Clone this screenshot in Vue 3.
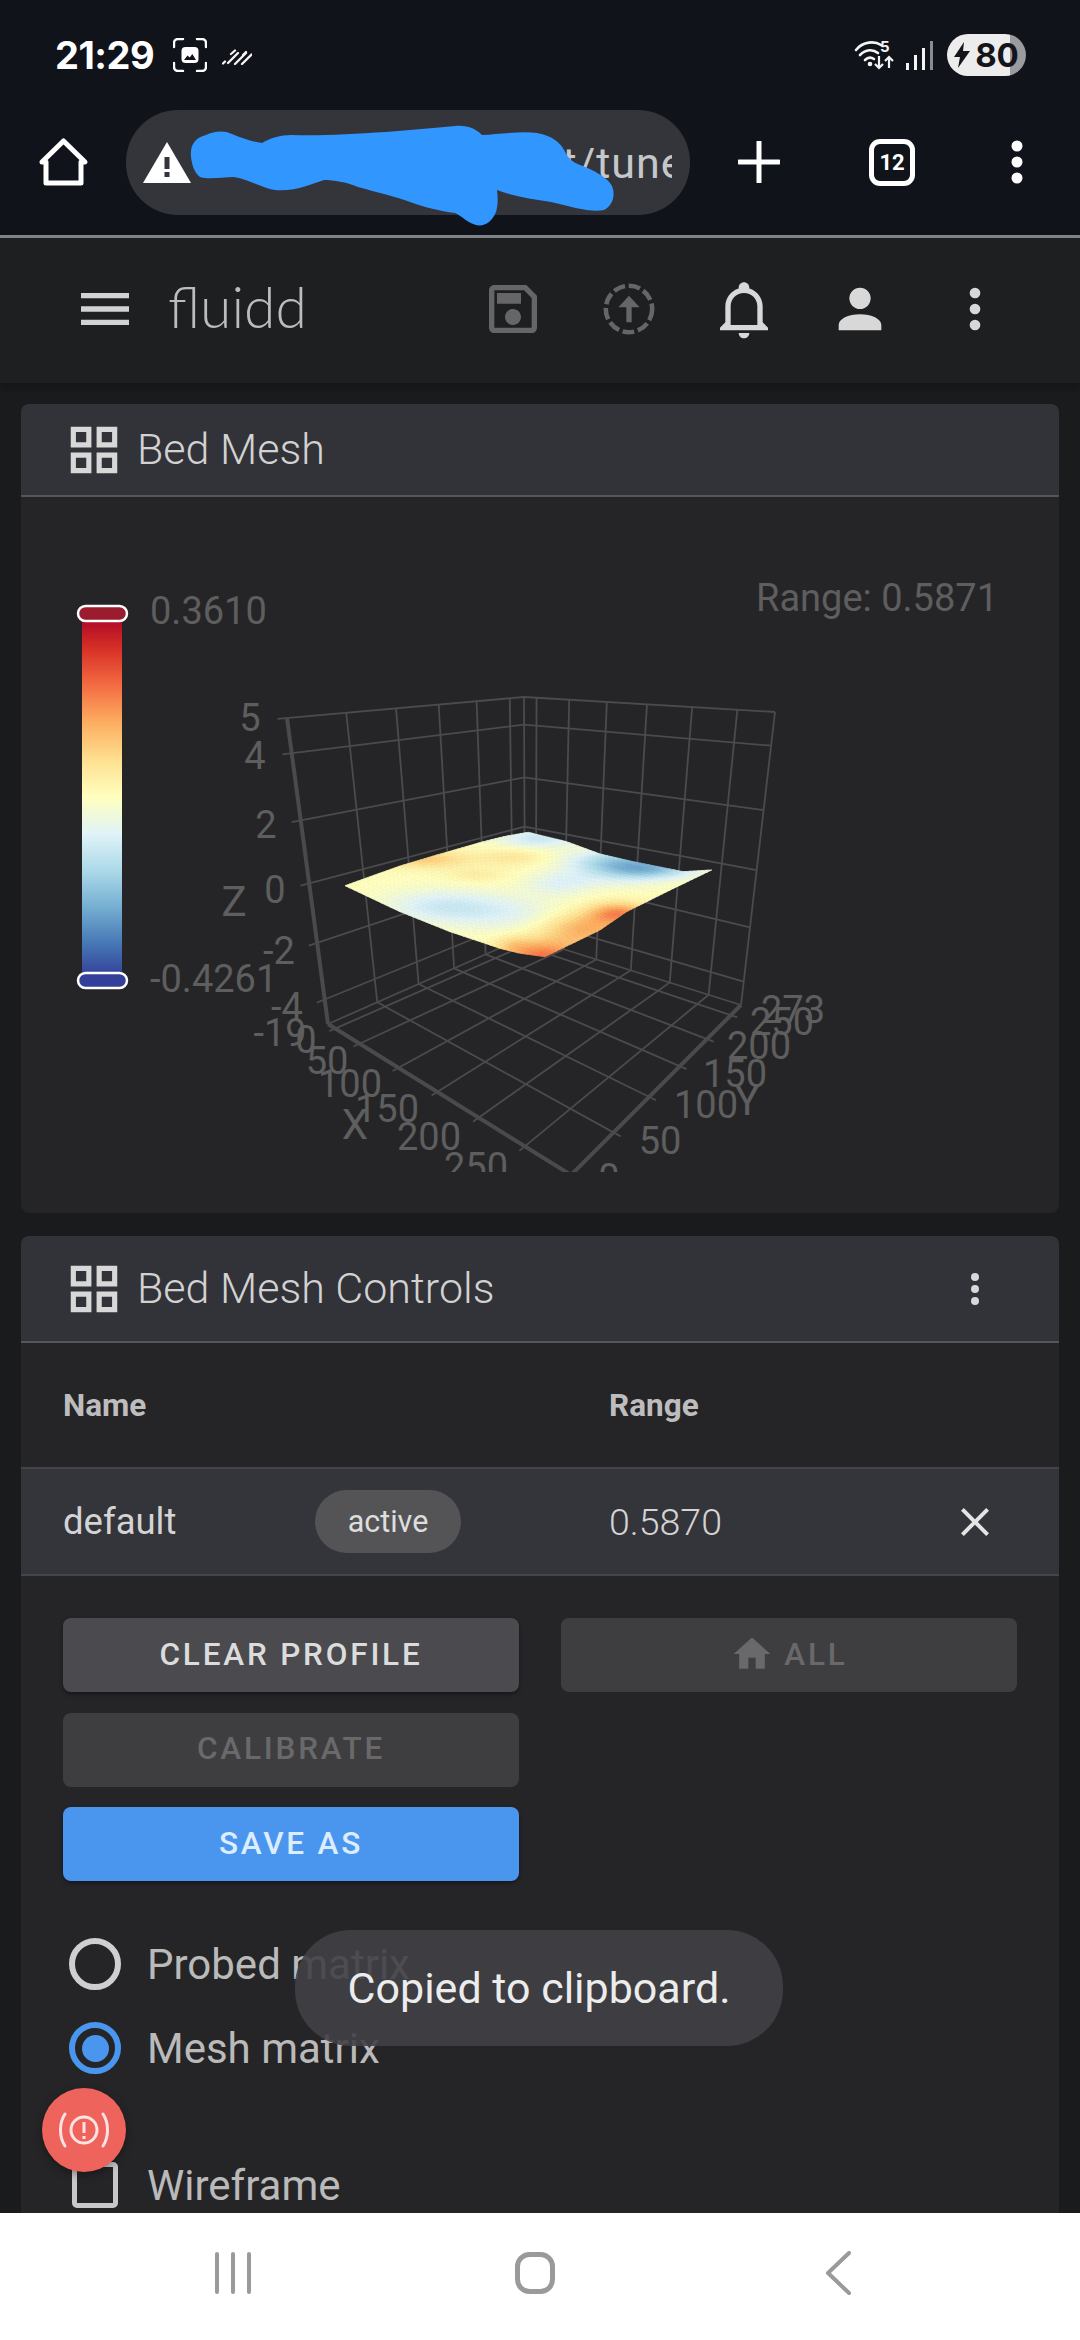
<template>
  <div class="phone">
    <div class="status">
      <span class="time">21:29</span>
      <svg class="shot" width="34" height="34" viewBox="0 0 34 34">
        <path d="M1 9V5a4 4 0 0 1 4-4h5M24 1h5a4 4 0 0 1 4 4v4M33 25v4a4 4 0 0 1-4 4h-5M10 33H5a4 4 0 0 1-4-4v-4" fill="none" stroke="#fff" stroke-width="2.4" stroke-linecap="round" />
        <rect x="8.5" y="9" width="17" height="16" rx="4" fill="#fff" />
        <path d="M11 22l3.5-4.5 2.2 2 2.6-3.5 3.7 6z" fill="#11131a" />
      </svg>
      <svg class="slashes" width="30" height="16" viewBox="0 0 30 16">
        <path d="M1 14.5l2-2M6 14l10-10M9 5l4-3.500M13 15L24 4M21 6l3-3M20 15l9.500-9.500" stroke="#f4f4f4" stroke-width="2.300" stroke-linecap="round" fill="none" />
      </svg>
      <div class="status-right">
        <svg width="42" height="30" viewBox="0 0 42 30">
          <path d="M2 10C9 1 21 1 27 5M6 15c6-6 13-6 18-2M11 20c3-3 6-3 9-1" fill="none" stroke="#f4f4f4" stroke-width="2.600" stroke-linecap="round" />
          <circle cx="16" cy="24" r="2.300" fill="#f4f4f4" />
          <text x="26" y="12" class="wifi-five">5</text>
          <path d="M25 16v12M21 24l4 4 4-4M35 28V17M31 21l4-4 4 4" fill="none" stroke="#f4f4f4" stroke-width="2.200" />
        </svg>
        <div class="signal">
          <i class="b1"></i><i class="b2"></i><i class="b3"></i><i class="b4"></i>
        </div>
        <div class="battery">
          <svg width="16" height="26" viewBox="0 0 16 26"><path d="M10 0L0 15h6l-2 11L16 9H9z" fill="#14151a" /></svg>
          <span>80</span>
        </div>
      </div>
    </div>

    <div class="browser">
      <svg class="home" width="56" height="56" viewBox="36 135 56 56">
        <path d="M63.500 142L85 163H81V184H46V163H42Z" fill="none" stroke="#fff" stroke-width="5" stroke-linejoin="round" />
      </svg>
      <div class="url">
        <svg width="48" height="42" viewBox="0 0 48 42">
          <path d="M24 0L48 41H0Z" fill="#fff" />
          <rect x="21.500" y="15" width="5" height="12" fill="#33353b" />
          <rect x="21.500" y="30" width="5" height="5" fill="#33353b" />
        </svg>
        <span class="url-text">it/tune</span>
      </div>
      <svg class="plus" width="42" height="42" viewBox="0 0 42 42">
        <path d="M21 1V41M1 21H41" stroke="#fff" stroke-width="5" stroke-linecap="round" />
      </svg>
      <div class="tabs">12</div>
      <svg class="browser-dots" width="16" height="46" viewBox="0 0 16 46">
        <circle cx="8" cy="7" r="5.500" fill="#fff" /><circle cx="8" cy="23" r="5.500" fill="#fff" /><circle cx="8" cy="39" r="5.500" fill="#fff" />
      </svg>
    </div>

    <svg class="scribble" width="1080" height="240" viewBox="0 0 1080 240">
      <path d="M191 157C190 146 194 138 206 135C214 131 224 130 232 134C242 138 252 142 262 143C270 138 280 135 292 135C320 136 352 134 386 132C410 130 434 128 455 126C468 125 476 129 482 135C500 134 522 131 537 133C552 136 560 142 564 150C568 158 572 162 580 165C594 170 608 178 612 186C616 196 612 206 604 210C592 213 572 207 551 202C532 199 512 196 497 190C498 198 498 205 496 212C492 222 484 227 476 225C466 222 462 216 455 213C440 211 424 207 413 203C394 196 376 192 358 187C346 182 334 180 324 180C312 184 294 192 275 190C262 188 250 180 234 177C222 177 210 180 200 177C194 172 192 165 191 157Z" fill="#3197ff" />
    </svg>

    <div class="appbar">
      <svg class="menu" viewBox="0 0 24 24"><path :d="icons.menu" /></svg>
      <span class="logo">fluidd</span>
      <div class="appbar-actions">
        <button class="icon-btn off"><svg viewBox="0 0 24 24"><path :d="icons.save" /></svg></button>
        <button class="icon-btn off">
          <svg viewBox="0 0 24 24">
            <circle cx="12" cy="12" r="8.700" fill="none" stroke="currentColor" stroke-width="1.700" stroke-dasharray="4.400 1.400" />
            <path d="M12 7L8 11.300H11V17H13V11.300H16Z" />
          </svg>
        </button>
        <button class="icon-btn"><svg viewBox="0 0 24 24"><path :d="icons.bell" /></svg></button>
        <button class="icon-btn"><svg viewBox="0 0 24 24"><path :d="icons.account" /></svg></button>
        <button class="icon-btn"><svg viewBox="0 0 24 24"><path :d="icons.dots" /></svg></button>
      </div>
    </div>

    <main class="content">
      <section class="card">
        <header class="card-head slim">
          <svg class="card-icon" viewBox="0 0 24 24"><path :d="icons.grid" /></svg>
          <span class="card-title">Bed Mesh</span>
        </header>
        <svg class="chart" width="1038" height="716" viewBox="21 497 1038 716">
          <defs>
            <linearGradient id="legend" x1="0" y1="0" x2="0" y2="1">
              <stop v-for="(c, i) in legendStops" :key="i" :offset="i / (legendStops.length - 1)" :stop-color="c" />
            </linearGradient>
            <clipPath id="plot"><rect x="21" y="497" width="1038" height="675" /></clipPath>
          </defs>

          <rect x="82" y="612" width="40" height="370" fill="url(#legend)" />
          <rect x="78" y="606" width="49" height="15" rx="7.500" fill="#9b1c2e" stroke="#fff" stroke-width="2.500" />
          <rect x="78" y="973" width="49" height="15" rx="7.500" fill="#33409a" stroke="#fff" stroke-width="2.500" />
          <text x="150" y="624" class="chart-text">0.3610</text>
          <text x="150" y="992" class="chart-text">-0.4261</text>
          <text x="998" y="611" class="chart-text" text-anchor="end">Range: 0.5871</text>

          <g clip-path="url(#plot)">
            <line v-for="(l, i) in gridLines" :key="'g' + i" :x1="l[0]" :y1="l[1]" :x2="l[2]" :y2="l[3]" class="grid-line" />
            <line v-for="(l, i) in axisLines" :key="'a' + i" :x1="l[0]" :y1="l[1]" :x2="l[2]" :y2="l[3]" class="axis-line" />
            <polygon v-for="(q, i) in meshQuads" :key="'m' + i" :points="q.points" :fill="q.color" :stroke="q.color" stroke-width="0.800" />
            <text v-for="t in axisLabels" :key="t.s + t.x" :x="t.x" :y="t.y + 13" class="chart-text" text-anchor="middle">{{ t.s }}</text>
            <text x="234" y="916" class="chart-title" text-anchor="middle">Z</text>
            <text x="355" y="1139" class="chart-title" text-anchor="middle">X</text>
            <text x="747" y="1115" class="chart-title" text-anchor="middle">Y</text>
          </g>
        </svg>
      </section>

      <section class="card">
        <header class="card-head">
          <svg class="card-icon" viewBox="0 0 24 24"><path :d="icons.grid" /></svg>
          <span class="card-title">Bed Mesh Controls</span>
          <svg class="card-dots" viewBox="0 0 24 24"><path :d="icons.dots" /></svg>
        </header>

        <div class="mesh-table head">
          <span>Name</span>
          <span></span>
          <span>Range</span>
        </div>
        <div class="mesh-table row">
          <span>default</span>
          <span><span class="chip">active</span></span>
          <span class="range-val">0.5870</span>
          <svg class="close" viewBox="0 0 24 24"><path :d="icons.close" /></svg>
        </div>

        <div class="actions">
          <button class="btn">CLEAR PROFILE</button>
          <button class="btn disabled">
            <svg viewBox="0 0 24 24"><path :d="icons.home" /></svg>
            ALL
          </button>
          <button class="btn disabled">CALIBRATE</button>
          <span></span>
          <button class="btn primary">SAVE AS</button>
        </div>

        <div class="options">
          <label class="opt"><span class="radio"></span>Probed matrix</label>
          <label class="opt"><span class="radio on"></span>Mesh matrix</label>
          <label class="opt wire"><span class="check"></span>Wireframe</label>
        </div>
      </section>
    </main>

    <nav class="navbar">
      <svg width="36" height="42" viewBox="0 0 36 42"><path d="M2 2V40M18 2V40M34 2V40" stroke="#9a9a9a" stroke-width="4" stroke-linecap="round" /></svg>
      <svg width="40" height="42" viewBox="0 0 40 42"><rect x="2.500" y="2.500" width="35" height="37" rx="12" fill="none" stroke="#9a9a9a" stroke-width="5" /></svg>
      <svg width="26" height="44" viewBox="0 0 26 44"><path d="M24 2L3 22L24 42" fill="none" stroke="#9a9a9a" stroke-width="4" stroke-linecap="round" stroke-linejoin="round" /></svg>
    </nav>

    <div class="toast">Copied to clipboard.</div>
    <button class="fab">
      <svg width="50" height="40" viewBox="0 0 50 40">
        <circle cx="25" cy="20" r="13" fill="none" stroke="#ffe3e1" stroke-width="3" />
        <path d="M25 12V23M25 26V29" stroke="#ffe3e1" stroke-width="3" />
        <path d="M6 4C0 13 0 27 6 36M44 4C50 13 50 27 44 36" fill="none" stroke="#ffe3e1" stroke-width="3" stroke-linecap="round" />
      </svg>
    </button>
  </div>
</template>

<script setup>
const icons = {
  menu: 'M3,6H21V8H3V6M3,11H21V13H3V11M3,16H21V18H3V16Z',
  dots: 'M12,16A2,2 0 0,1 14,18A2,2 0 0,1 12,20A2,2 0 0,1 10,18A2,2 0 0,1 12,16M12,10A2,2 0 0,1 14,12A2,2 0 0,1 12,14A2,2 0 0,1 10,12A2,2 0 0,1 12,10M12,4A2,2 0 0,1 14,6A2,2 0 0,1 12,8A2,2 0 0,1 10,6A2,2 0 0,1 12,4Z',
  account: 'M12,4A4,4 0 0,1 16,8A4,4 0 0,1 12,12A4,4 0 0,1 8,8A4,4 0 0,1 12,4M12,14C16.42,14 20,15.79 20,18V20H4V18C4,15.79 7.58,14 12,14Z',
  bell: 'M10 21H14C14 22.1 13.1 23 12 23S10 22.1 10 21M21 19V20H3V19L5 17V11C5 7.9 7 5.2 10 4.3V4C10 2.9 10.9 2 12 2S14 2.9 14 4V4.3C17 5.2 19 7.9 19 11V17L21 19M17 11C17 8.2 14.8 6 12 6S7 8.2 7 11V18H17V11Z',
  save: 'M17 3H5C3.89 3 3 3.9 3 5V19C3 20.1 3.89 21 5 21H19C20.1 21 21 20.1 21 19V7L17 3M19 19H5V5H16.17L19 7.83V19M12 12C10.34 12 9 13.34 9 15S10.34 18 12 18 15 16.66 15 15 13.66 12 12 12M6 6H15V10H6V6Z',
  grid: 'M3 11H11V3H3M5 5H9V9H5M13 21H21V13H13M15 15H19V19H15M3 21H11V13H3M5 15H9V19H5M13 3V11H21V3M19 9H15V5H19Z',
  close: 'M19,6.41L17.59,5L12,10.59L6.41,5L5,6.41L10.59,12L5,17.59L6.41,19L12,13.41L17.59,19L19,17.59L13.41,12L19,6.41Z',
  home: 'M10,20V14H14V20H19V12H22L12,3L2,12H5V20H10Z'
}

// RdYlBu, low to high
const palette = ['#313695', '#4575b4', '#74add1', '#abd9e9', '#e0f3f8', '#ffffbf', '#fee090', '#fdae61', '#f46d43', '#d73027', '#a50026']
const legendStops = [...palette].reverse()

const mix = (a, b, t) => a + (b - a) * t
const lerp = (p, q, t) => [mix(p[0], q[0], t), mix(p[1], q[1], t)]

// plot corners in page coordinates
const TL = [287, 718]
const TC = [524, 697]
const TR = [775, 712]
const L = [328, 1024]
const B = [525, 937]
const R = [741, 1005]
const F = [571, 1175]

const xTicks = [0.03, 0.13, 0.29, 0.45, 0.62, 0.81]
const xTicksBack = [0.05, 0.18, 0.33, 0.49, 0.67, 0.85]
const yTicks = [0.25, 0.46, 0.64, 0.8, 0.94]
const zTicks = [0, 0.115, 0.335, 0.54, 0.735, 0.92]

const seg = (p, q, over = 0) => {
  const end = lerp(p, q, 1 + over)
  return [p[0], p[1], end[0], end[1]]
}

const gridLines = []
xTicks.forEach((t, i) => {
  const back = lerp(B, R, xTicksBack[i])
  gridLines.push(seg(back, lerp(L, F, t), 0.03))
  gridLines.push(seg(back, lerp(TC, TR, xTicksBack[i])))
})
yTicks.forEach((t) => {
  const side = lerp(L, B, t)
  gridLines.push(seg(side, lerp(F, R, t), 0.03))
  gridLines.push(seg(side, lerp(TL, TC, t)))
})
zTicks.forEach((t) => {
  const mid = lerp(TC, B, t)
  gridLines.push(seg(mid, lerp(TL, L, t), 0.04))
  gridLines.push(seg(mid, lerp(TR, R, t)))
})
gridLines.push(seg(L, B), seg(B, R), seg(TC, B), seg(TR, R))

const axisLines = [seg(L, F), seg(F, R), seg(TL, L)]

const axisLabels = [
  { s: '5', x: 250, y: 718 }, { s: '4', x: 255, y: 756 }, { s: '2', x: 266, y: 825 },
  { s: '0', x: 275, y: 890 }, { s: '-2', x: 279, y: 951 }, { s: '-4', x: 287, y: 1007 },
  { s: '-19', x: 280, y: 1033 }, { s: '0', x: 306, y: 1040 }, { s: '50', x: 327, y: 1061 },
  { s: '100', x: 350, y: 1084 }, { s: '150', x: 387, y: 1109 }, { s: '200', x: 429, y: 1137 },
  { s: '250', x: 476, y: 1167 }, { s: '273', x: 793, y: 1010 }, { s: '250', x: 782, y: 1022 },
  { s: '200', x: 759, y: 1046 }, { s: '150', x: 735, y: 1074 }, { s: '100', x: 706, y: 1105 },
  { s: '50', x: 660, y: 1141 }, { s: '0', x: 609, y: 1178 }
]

// surface edges, measured from the plot (x must be monotonic)
const e1 = [[135, 317], [300, 258], [400, 228], [550, 185], [620, 168], [685, 157]]
const e2 = [[735, 530], [900, 450], [980, 395], [1100, 335], [1235, 270]]
const e3 = [[135, 317], [300, 395], [450, 455], [600, 505], [660, 520], [735, 530]]
const e4 = [[685, 157], [800, 185], [900, 222], [1000, 245], [1150, 275], [1235, 270]]

const along = (poly, t) => {
  const x = mix(poly[0][0], poly[poly.length - 1][0], t)
  for (let i = 1; i < poly.length; i++) {
    if (x <= poly[i][0]) {
      const k = (x - poly[i - 1][0]) / (poly[i][0] - poly[i - 1][0])
      return [x, mix(poly[i - 1][1], poly[i][1], k)]
    }
  }
  return poly[poly.length - 1]
}

const surface = (u, v) => {
  const a = along(e1, u)
  const b = along(e2, u)
  const c = along(e3, v)
  const d = along(e4, v)
  return [0, 1].map((k) =>
    (1 - v) * a[k] + v * b[k] + (1 - u) * c[k] + u * d[k] -
    ((1 - u) * (1 - v) * e1[0][k] + u * (1 - v) * e1[5][k] + (1 - u) * v * e2[0][k] + u * v * e2[4][k])
  )
}

const bumps = [
  [950, 245, 100, 26, -0.42], [1070, 268, 90, 20, -0.38], [720, 175, 90, 20, -0.28],
  [420, 378, 120, 35, -0.24], [620, 400, 130, 40, -0.17], [780, 310, 70, 25, -0.18],
  [950, 290, 100, 25, -0.14], [960, 398, 60, 22, 0.45], [860, 445, 90, 35, 0.38],
  [735, 530, 80, 35, 0.55], [640, 495, 40, 20, 0.15], [380, 238, 90, 18, 0.26],
  [640, 232, 70, 18, 0.13], [530, 285, 60, 15, 0.1]
]

const heightAt = (x, y) => bumps.reduce((sum, [cx, cy, sx, sy, a]) =>
  sum + a * Math.exp(-((x - cx) ** 2) / (2 * sx * sx) - ((y - cy) ** 2) / (2 * sy * sy)), 0.01)

const hexToRgb = (h) => [1, 3, 5].map((i) => parseInt(h.slice(i, i + 2), 16))

const colorAt = (value) => {
  const pos = Math.min(9.999, Math.max(0, (value + 1) * 5))
  const i = Math.floor(pos)
  const p = hexToRgb(palette[i])
  const q = hexToRgb(palette[i + 1])
  return `rgb(${p.map((c, k) => Math.round(mix(c, q[k], pos - i))).join(',')})`
}

const toPage = ([x, y]) => `${(x / 3 + 300).toFixed(1)},${(y / 3 + 780).toFixed(1)}`

const steps = 44
const meshQuads = []
for (let i = 0; i < steps; i++) {
  for (let j = 0; j < steps; j++) {
    const corners = [[i, j], [i + 1, j], [i + 1, j + 1], [i, j + 1]].map(([a, b]) => surface(a / steps, b / steps))
    const mid = surface((i + 0.5) / steps, (j + 0.5) / steps)
    meshQuads.push({ points: corners.map(toPage).join(' '), color: colorAt(heightAt(mid[0], mid[1])) })
  }
}
</script>

<style>
html, body {
  margin: 0;
  background: #1a1b1d;
}
</style>

<style scoped>
.phone {
  position: relative;
  width: 1080px;
  height: 2340px;
  display: flex;
  flex-direction: column;
  overflow: hidden;
  font-family: Roboto, "Liberation Sans", sans-serif;
  background: #1a1b1d;
}

.status {
  height: 110px;
  flex: none;
  display: flex;
  align-items: center;
  padding: 0 54px 0 55px;
  background: #11131a;
  color: #fff;
}
.time {
  font-family: Inter, sans-serif;
  font-weight: 700;
  font-size: 38px;
  letter-spacing: -0.5px;
  width: 118px;
}
.slashes {
  margin-left: 15px;
  margin-top: 4px;
}
.status-right {
  margin-left: auto;
  display: flex;
  align-items: center;
}
.wifi-five {
  font: 700 15px Inter, sans-serif;
  fill: #f4f4f4;
}
.signal {
  display: flex;
  align-items: flex-end;
  gap: 4.500px;
  height: 29px;
  margin-left: 10px;
}
.signal i {
  width: 3.500px;
  background: #f4f4f4;
}
.signal .b1 { height: 7px; }
.signal .b2 { height: 15px; }
.signal .b3 { height: 22px; }
.signal .b4 { height: 29px; background: #8b8c90; }
.battery {
  margin-left: 14px;
  width: 79px;
  height: 42px;
  border-radius: 21px;
  background: linear-gradient(to right, #ececec 80%, #9b9b9d 80%);
  display: flex;
  align-items: center;
  justify-content: center;
  gap: 5px;
  color: #14151a;
  font: 700 33px Inter, sans-serif;
}

.browser {
  height: 125px;
  box-sizing: content-box;
  flex: none;
  display: flex;
  align-items: flex-start;
  background: #11131a;
  border-bottom: 3px solid #85878b;
}
.home {
  margin: 24px 34px 0 36px;
  flex: none;
}
.url {
  width: 564px;
  height: 105px;
  border-radius: 52px;
  background: #33353b;
  display: flex;
  align-items: center;
  padding: 0 18px 0 17px;
  box-sizing: border-box;
  flex: none;
}
.url svg {
  flex: none;
}
.url-text {
  flex: 1;
  min-width: 0;
  overflow: hidden;
  white-space: nowrap;
  color: #c6c7ca;
  font-size: 43px;
  letter-spacing: 1px;
  padding-left: 360px;
}
.plus {
  margin: 31px 0 0 48px;
  flex: none;
}
.tabs {
  margin: 29px 0 0 89px;
  width: 46px;
  height: 47px;
  box-sizing: border-box;
  border: 5px solid #fff;
  border-radius: 11px;
  color: #fff;
  font: 700 22px/37px Roboto, sans-serif;
  text-align: center;
  flex: none;
}
.browser-dots {
  margin: 29px 0 0 94px;
  flex: none;
}

.scribble {
  position: absolute;
  left: 0;
  top: 0;
}

.appbar {
  height: 145px;
  box-sizing: border-box;
  padding: 0 0 3px 73px;
  flex: none;
  display: flex;
  align-items: center;
  background: #1e1f21;
  color: #d2d2d2;
  box-shadow: 0 4px 10px rgba(0, 0, 0, 0.25);
  position: relative;
}
.menu {
  width: 64px;
  height: 64px;
  fill: #d2d2d2;
}
.logo {
  margin: -6px 0 0 31px;
  font-family: Lato, sans-serif;
  font-weight: 300;
  font-size: 57px;
  color: #bcbcbc;
}
.appbar-actions {
  margin-left: auto;
  margin-right: 47px;
  display: flex;
}
.icon-btn {
  width: 115.500px;
  height: 70px;
  padding: 0;
  border: none;
  background: none;
  color: #d8d8d8;
  display: flex;
  align-items: center;
  justify-content: center;
}
.icon-btn svg {
  width: 64px;
  height: 64px;
  fill: currentColor;
}
.icon-btn.off {
  color: #666668;
}

.content {
  flex: 1;
  min-height: 0;
  overflow: hidden;
  padding: 21px 21px 0;
  display: flex;
  flex-direction: column;
  gap: 23px;
}
.card {
  flex: none;
  background: #252527;
  border-radius: 8px;
}
.card-head {
  height: 107px;
  box-sizing: border-box;
  display: flex;
  align-items: center;
  padding-left: 42px;
  background: #323338;
  border-radius: 8px 8px 0 0;
  border-bottom: 2px solid #55565a;
  color: #cfcfcf;
}
.card-head.slim {
  height: 93px;
}
.card-icon {
  width: 62px;
  height: 62px;
  fill: #d8d8d8;
}
.card-title {
  margin: -2px 0 0 12px;
  font-size: 43px;
  font-weight: 300;
  color: #d2d2d2;
}
.card-dots {
  margin-left: auto;
  margin-right: 60px;
  width: 48px;
  height: 48px;
  fill: #d8d8d8;
}

.chart {
  display: block;
}
.chart-text {
  font-family: Roboto, sans-serif;
  font-size: 38px;
  fill: #5e5e5f;
}
.chart-title {
  font-family: Roboto, sans-serif;
  font-size: 42px;
  fill: #5e5e5f;
}
.grid-line {
  stroke: #4b4b4d;
  stroke-width: 1.800;
}
.axis-line {
  stroke: #4a4a4c;
  stroke-width: 4;
}

.mesh-table {
  display: grid;
  grid-template-columns: 252px 294px 1fr 84px;
  align-items: center;
  padding: 0 42px;
}
.mesh-table.head {
  height: 124px;
  font-size: 31.500px;
  font-weight: 700;
  color: #bdbdbd;
}
.mesh-table.row {
  height: 109px;
  box-sizing: border-box;
  background: #34353a;
  border-top: 2px solid #444549;
  border-bottom: 2px solid #444549;
  font-size: 36.500px;
  color: #d4d4d4;
}
.chip {
  display: inline-block;
  width: 146px;
  height: 63px;
  border-radius: 32px;
  background: #545456;
  font-size: 30.500px;
  line-height: 63px;
  text-align: center;
  color: #dedede;
}
.range-val {
  font-weight: 300;
  font-size: 37.500px;
}
.close {
  width: 48px;
  height: 48px;
  fill: #e4e4e4;
  margin-left: 18px;
}

.actions {
  display: grid;
  grid-template-columns: 456px 456px;
  column-gap: 42px;
  row-gap: 20.500px;
  padding: 42px 42px 0;
}
.btn {
  height: 74px;
  padding: 0 0 2px;
  border: none;
  border-radius: 8px;
  background: #4a4a4f;
  color: #dcdcdc;
  font-family: Roboto, sans-serif;
  font-size: 31.500px;
  font-weight: 500;
  letter-spacing: 2.800px;
  display: flex;
  align-items: center;
  justify-content: center;
  gap: 10px;
  box-shadow: 0 3px 3px -2px rgba(0, 0, 0, 0.2), 0 2px 4px rgba(0, 0, 0, 0.3);
}
.btn svg {
  width: 44px;
  height: 44px;
  fill: currentColor;
}
.btn.disabled {
  background: #3e3e40;
  color: #69696b;
  box-shadow: none;
}
.btn.primary {
  background: #4a96ee;
  color: #dcedff;
}

.options {
  padding: 41px 0 0 48px;
}
.opt {
  height: 84px;
  display: flex;
  align-items: center;
  font-size: 42px;
  color: #bababa;
}
.opt.wire {
  margin-top: 53px;
}
.radio {
  width: 52px;
  height: 52px;
  box-sizing: border-box;
  border: 6px solid #cfcfcf;
  border-radius: 50%;
  margin-right: 26px;
  flex: none;
  position: relative;
}
.radio.on {
  border-color: #4a96ee;
}
.radio.on::after {
  content: "";
  position: absolute;
  inset: 6.500px;
  border-radius: 50%;
  background: #4a96ee;
}
.check {
  width: 46px;
  height: 46px;
  box-sizing: border-box;
  border: 5.500px solid #c8c8c8;
  border-radius: 5px;
  margin: 0 29px 0 3px;
  flex: none;
}

.navbar {
  height: 127px;
  box-sizing: border-box;
  padding: 0 0 8px 215px;
  flex: none;
  background: #fff;
  display: flex;
  align-items: center;
  position: relative;
}
.navbar svg:nth-child(2) { margin-left: 264px; }
.navbar svg:nth-child(3) { margin-left: 270px; }

.toast {
  position: absolute;
  left: 295px;
  top: 1930px;
  width: 488px;
  height: 116px;
  border-radius: 56px;
  background: rgba(64, 64, 70, 0.9);
  color: #ececec;
  font-size: 43px;
  line-height: 116px;
  text-align: center;
}
.fab {
  position: absolute;
  left: 42px;
  top: 2088px;
  width: 84px;
  height: 84px;
  padding: 0;
  border: none;
  border-radius: 50%;
  background: #ee635c;
  display: flex;
  align-items: center;
  justify-content: center;
  box-shadow: 0 3px 8px rgba(0, 0, 0, 0.35);
}
</style>
